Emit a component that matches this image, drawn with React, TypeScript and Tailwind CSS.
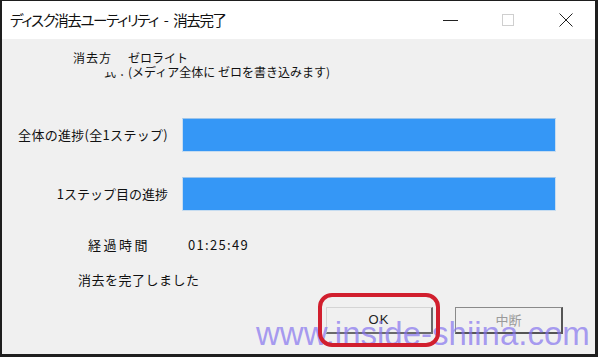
export default function App() {
  return (
    <div className="relative w-[600px] h-[357px] bg-white overflow-hidden font-['Noto_Sans_CJK_JP',sans-serif] text-[#111]">
      <div className="w-[598px] h-[357px] flex flex-col border-t border-l-2 border-r-[3px] border-b-[3px] border-[#1e1e1e]">
        {/* title bar */}
        <div className="h-[38px] shrink-0 bg-white flex items-center">
          <span className="pl-[8px] text-[14.5px] leading-none tracking-[-1.4px] [word-spacing:4px] [font-feature-settings:'palt']">
            ディスク消去ユーティリティ - 消去完了
          </span>
          <div className="ml-auto flex h-full">
            <div className="w-[58px] h-full flex items-center justify-center">
              <div className="w-[15px] h-px bg-[#222]" />
            </div>
            <div className="w-[58px] h-full flex items-center justify-center">
              <div className="w-[12px] h-[12px] border border-[#cfcfcf]" />
            </div>
            <div className="w-[58px] h-full flex items-center justify-center">
              <svg width="14" height="14" viewBox="0 0 14 14">
                <path d="M0.5 0.5 L13.5 13.5 M13.5 0.5 L0.5 13.5" stroke="#222" strokeWidth="1" fill="none" />
              </svg>
            </div>
          </div>
        </div>

        {/* body */}
        <div className="flex-1 bg-[#f0f0f0] flex flex-col">
          {/* method */}
          <div className="pt-[12px] pl-[71px] text-[12px] leading-[14px] grid grid-cols-[55px_auto] justify-start">
            <span className="tracking-[1px]">消去方</span>
            <span>ゼロライト</span>
            <div className="h-[14px] flex flex-col justify-end items-end">
              <div className="h-[7px] overflow-hidden flex flex-col justify-end">
                <span className="block leading-[14px] shrink-0">式：</span>
              </div>
            </div>
            <span>(メディア全体に ゼロを書き込みます)</span>
          </div>

          {/* progress */}
          <div className="mt-[39px] grid grid-cols-[166px_374px] gap-x-[14px] gap-y-[25px] items-center text-[13px]">
            <span className="text-right tracking-[0.3px]">全体の進捗(全1ステップ)</span>
            <div className="h-[34px] border border-[#c6dcf0] bg-[#3597f6] border-t-[#9cc4ea]" />
            <span className="text-right">1ステップ目の進捗</span>
            <div className="h-[34px] border border-[#c6dcf0] bg-[#3597f6] border-t-[#9cc4ea]" />
          </div>

          {/* elapsed */}
          <div className="mt-[25px] flex text-[13px] leading-[18px]">
            <span className="pl-[86px] w-[186px] tracking-[2.5px]">経過時間</span>
            <span className="tracking-[1.3px]">01:25:49</span>
          </div>
          <div className="mt-[17px] pl-[76px] text-[13px] leading-[18px] tracking-[0.5px]">消去を完了しました</div>

          {/* buttons */}
          <div className="mt-[18px] pl-[324px] flex gap-[22px] text-[13px]">
            <div className="w-[107px] h-[27px] flex items-center justify-center bg-[#f0f0f0] border-t border-l border-[#d4d4d4] border-r-2 border-b-2 border-r-[#6a6a6a] border-b-[#6a6a6a]">
              <span className="text-[#222] font-['Liberation_Sans',sans-serif] tracking-[1px]">OK</span>
            </div>
            <div className="w-[108px] h-[27px] flex items-center justify-center bg-[#f0f0f0] border border-[#8a8a8a] border-r-2 border-b-2 border-r-[#555] border-b-[#555]">
              <span className="text-[#9a9a9a]">中断</span>
            </div>
          </div>
        </div>
      </div>

      {/* watermark */}
      <div className="absolute left-[256px] top-[317px] text-[33px] leading-none font-['Liberation_Sans',sans-serif] text-[#8573ef]/70 whitespace-nowrap">
        www.inside-shiina.com
      </div>
      {/* red highlight */}
      <div className="absolute left-[318px] top-[293px] w-[122px] h-[54px] border-[4px] border-[#d11f2e] rounded-[14px]" />
    </div>
  );
}
